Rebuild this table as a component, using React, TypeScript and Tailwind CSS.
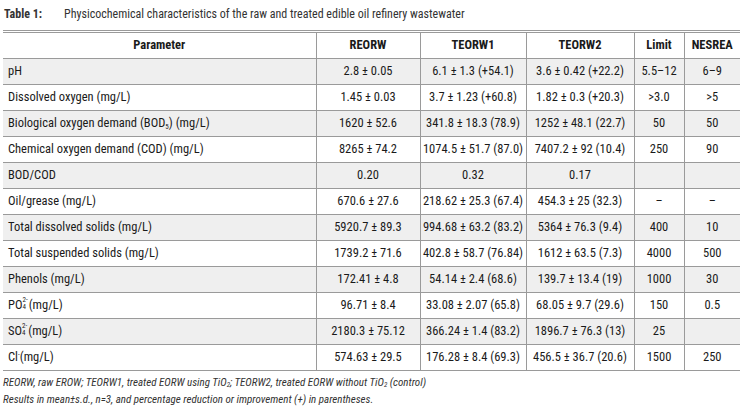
import React from "react";

const font = { fontFamily: 'Roboto, "Liberation Sans", sans-serif', fontStretch: "condensed" as const };

interface Row {
  param: React.ReactNode;
  values: string[];
}

// stacked superscript charge over subscript count, as in PO4 2-
const Ion = ({ sub, sup }: { sub: string; sup: string }) => (
  <span className="inline-flex flex-col text-[7px] leading-[7px] align-middle -mt-[2px] mr-[1px]">
    <span>{sup}</span>
    <span>{sub}</span>
  </span>
);

const rows: Row[] = [
  { param: "pH", values: ["2.8 ± 0.05", "6.1 ± 1.3 (+54.1)", "3.6 ± 0.42 (+22.2)", "5.5–12", "6–9"] },
  { param: "Dissolved oxygen (mg/L)", values: ["1.45 ± 0.03", "3.7 ± 1.23 (+60.8)", "1.82 ± 0.3 (+20.3)", ">3.0", ">5"] },
  {
    param: (
      <>
        Biological oxygen demand (BOD<sub className="text-[7px]">5</sub>) (mg/L)
      </>
    ),
    values: ["1620 ± 52.6", "341.8 ± 18.3 (78.9)", "1252 ± 48.1 (22.7)", "50", "50"],
  },
  { param: "Chemical oxygen demand (COD) (mg/L)", values: ["8265 ± 74.2", "1074.5 ± 51.7 (87.0)", "7407.2 ± 92 (10.4)", "250", "90"] },
  { param: "BOD/COD", values: ["0.20", "0.32", "0.17", "", ""] },
  { param: "Oil/grease (mg/L)", values: ["670.6 ± 27.6", "218.62 ± 25.3 (67.4)", "454.3 ± 25 (32.3)", "–", "–"] },
  { param: "Total dissolved solids (mg/L)", values: ["5920.7 ± 89.3", "994.68 ± 63.2 (83.2)", "5364 ± 76.3 (9.4)", "400", "10"] },
  { param: "Total suspended solids (mg/L)", values: ["1739.2 ± 71.6", "402.8 ± 58.7 (76.84)", "1612 ± 63.5 (7.3)", "4000", "500"] },
  { param: "Phenols (mg/L)", values: ["172.41 ± 4.8", "54.14 ± 2.4 (68.6)", "139.7 ± 13.4 (19)", "1000", "30"] },
  {
    param: (
      <>
        PO<Ion sub="4" sup="2-" />(mg/L)
      </>
    ),
    values: ["96.71 ± 8.4", "33.08 ± 2.07 (65.8)", "68.05 ± 9.7 (29.6)", "150", "0.5"],
  },
  {
    param: (
      <>
        SO<Ion sub="4" sup="2-" />(mg/L)
      </>
    ),
    values: ["2180.3 ± 75.12", "366.24 ± 1.4 (83.2)", "1896.7 ± 76.3 (13)", "25", ""],
  },
  {
    param: (
      <>
        Cl<sup className="text-[7px]">-</sup>(mg/L)
      </>
    ),
    values: ["574.63 ± 29.5", "176.28 ± 8.4 (69.3)", "456.5 ± 36.7 (20.6)", "1500", "250"],
  },
];

const headers = ["REORW", "TEORW1", "TEORW2", "Limit", "NESREA"];

export default function App() {
  return (
    <div className="w-[743px] h-[420px] bg-white text-[#1a1a1a] overflow-hidden" style={font}>
      <div className="flex items-center h-[28px] pl-[4px] text-[12px] text-[#333]">
        <span className="font-bold w-[60px]">Table 1:</span>
        <span>Physicochemical characteristics of the raw and treated edible oil refinery wastewater</span>
      </div>
      <div className="ml-[3px] w-[737px] mt-[2px] border-t-[3px] border-double border-[#9a9a9a]">
        <table className="w-full border-collapse text-[12.5px] table-fixed">
          <colgroup>
            <col className="w-[313px]" />
            <col className="w-[104px]" />
            <col className="w-[106px]" />
            <col className="w-[108px]" />
            <col className="w-[50px]" />
            <col className="w-[56px]" />
          </colgroup>
          <thead>
            <tr className="h-[25px] border-b border-[#9a9a9a]">
              <th className="font-bold text-center p-0">Parameter</th>
              {headers.map((h) => (
                <th key={h} className="font-bold text-center p-0 border-l border-[#9a9a9a]">
                  {h}
                </th>
              ))}
            </tr>
          </thead>
          <tbody>
            {rows.map((r, i) => (
              <tr key={i} className={`h-[26px] border-b border-[#9a9a9a] ${i % 2 === 0 ? "bg-[#efefef]" : "bg-white"}`}>
                <td className="pl-[5px] p-0 text-left leading-none">{r.param}</td>
                {r.values.map((v, j) => (
                  <td key={j} className="p-0 text-center border-l border-[#9a9a9a] whitespace-nowrap">
                    {v}
                  </td>
                ))}
              </tr>
            ))}
          </tbody>
        </table>
      </div>
      <div className="pl-[3px] pt-[3px] text-[11px] italic text-[#333] leading-[17px]">
        <div>
          REORW, raw EROW; TEORW1, treated EORW using TiO<sub className="text-[7px]">2</sub>; TEORW2, treated EORW without TiO
          <sub className="text-[7px]">2</sub> (control)
        </div>
        <div>Results in mean±s.d., n=3, and percentage reduction or improvement (+) in parentheses.</div>
      </div>
    </div>
  );
}
